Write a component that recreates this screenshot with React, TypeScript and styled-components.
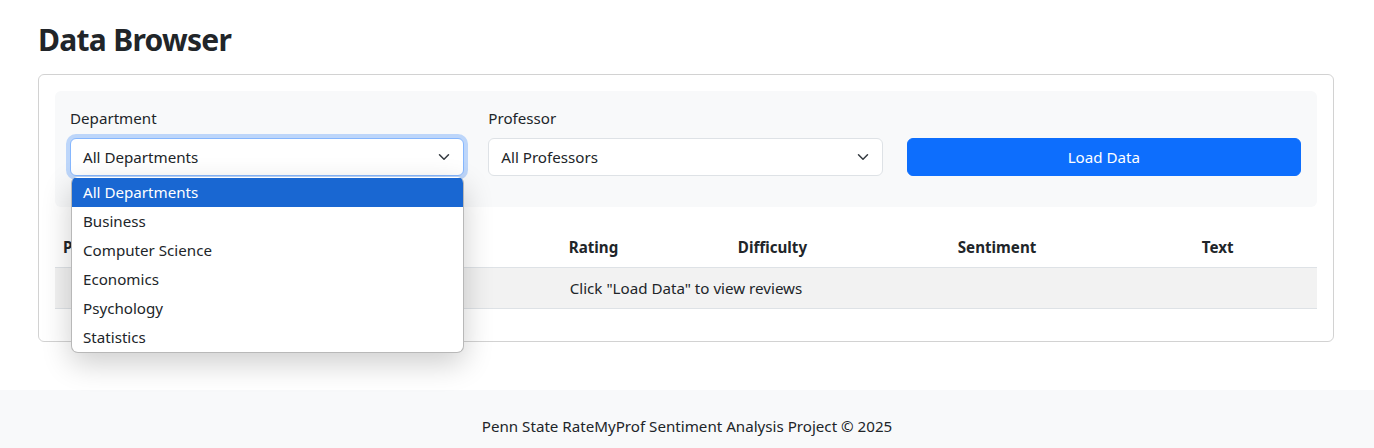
import React from "react";
import styled, { createGlobalStyle } from "styled-components";

const GlobalStyle = createGlobalStyle`
  *, *::before, *::after { box-sizing: border-box; }
  body {
    margin: 0;
    font-family: "Noto Sans", "Open Sans", sans-serif;
    font-size: 15.15px;
    line-height: 24px;
    color: #212529;
    background: #fff;
  }
`;

const Page = styled.div`
  min-height: 448px;
  display: flex;
  flex-direction: column;
`;

const Container = styled.main`
  width: 100%;
  max-width: 1320px;
  margin: 0 auto;
  padding: 21px 13px 0 11px;
`;

const Title = styled.h1`
  margin: 0 0 15px;
  font-size: 30px;
  line-height: 38px;
  font-weight: 700;
  letter-spacing: -0.7px;
`;

const Card = styled.section`
  border: 1px solid rgba(0, 0, 0, 0.175);
  border-radius: 6px;
  padding: 16px;
`;

const FilterPanel = styled.div`
  background: #f8f9fa;
  border-radius: 6px;
  padding: 15px 16px 16px 15px;
  margin-bottom: 20px;
`;

const FilterRow = styled.div`
  display: grid;
  grid-template-columns: repeat(3, 1fr);
  column-gap: 24px;
  align-items: end;
  padding-bottom: 15px;
`;

const Field = styled.div`
  display: flex;
  flex-direction: column;
  position: relative;
`;

const Label = styled.label`
  margin-bottom: 8px;
`;

const Select = styled.div<{ $focused?: boolean }>`
  position: relative;
  height: 38px;
  display: flex;
  align-items: center;
  padding: 0 36px 0 12px;
  background: #fff;
  border: 1px solid ${(p) => (p.$focused ? "#86b7fe" : "#dee2e6")};
  border-radius: 6px;
  box-shadow: ${(p) => (p.$focused ? "0 0 0 4px rgba(13,110,253,.25)" : "none")};
  white-space: nowrap;
`;

const Chevron = styled.svg`
  position: absolute;
  right: 13px;
  top: 50%;
  width: 12px;
  height: 12px;
  margin-top: -6px;
`;

const Menu = styled.ul`
  position: absolute;
  left: 1px;
  right: 0;
  top: 100%;
  margin: 1px 0 0;
  padding: 1px 0 0;
  list-style: none;
  background: #fff;
  border: 1px solid #b8b8b8;
  border-top: none;
  border-radius: 6px 6px 7px 7px;
  overflow: hidden;
  box-shadow: 0 10px 30px rgba(0, 0, 0, 0.2);
  z-index: 10;
`;

const MenuItem = styled.li<{ $active?: boolean }>`
  height: 29px;
  line-height: 29px;
  padding-left: 11px;
  background: ${(p) => (p.$active ? "#1967d2" : "transparent")};
  color: ${(p) => (p.$active ? "#fff" : "#212529")};
`;

const Button = styled.button`
  height: 38px;
  border: 1px solid #0d6efd;
  border-radius: 6px;
  background: #0d6efd;
  color: #fff;
  font: inherit;
  cursor: pointer;
`;

const Table = styled.table`
  width: 100%;
  border-collapse: collapse;
  margin-bottom: 16px;
`;

const Th = styled.th`
  text-align: left;
  font-weight: 700;
  padding: 8px;
  border-bottom: 1px solid #dee2e6;
`;

const Td = styled.td`
  padding: 8px;
  text-align: center;
  background: #f2f2f2;
  border-bottom: 1px solid #dee2e6;
`;

const Footer = styled.footer`
  margin-top: 48px;
  background: #f8f9fa;
  padding: 24px 0;
  text-align: center;
`;

const ChevronIcon = () => (
  <Chevron viewBox="0 0 16 16" aria-hidden>
    <path d="m2 5 6 6 6-6" fill="none" stroke="#343a40" strokeWidth="2" strokeLinecap="round" strokeLinejoin="round" />
  </Chevron>
);

const departments = ["All Departments", "Business", "Computer Science", "Economics", "Psychology", "Statistics"];
const columns = ["Professor", "Department", "Rating", "Difficulty", "Sentiment", "Text"];

export default function App() {
  return (
    <Page>
      <GlobalStyle />
      <Container>
        <Title>Data Browser</Title>
        <Card>
          <FilterPanel>
            <FilterRow>
              <Field>
                <Label>Department</Label>
                <Select $focused>
                  All Departments
                  <ChevronIcon />
                </Select>
                <Menu>
                  {departments.map((d, i) => (
                    <MenuItem key={d} $active={i === 0}>{d}</MenuItem>
                  ))}
                </Menu>
              </Field>
              <Field>
                <Label>Professor</Label>
                <Select>
                  All Professors
                  <ChevronIcon />
                </Select>
              </Field>
              <Button>Load Data</Button>
            </FilterRow>
          </FilterPanel>
          <Table>
            <thead>
              <tr>
                {columns.map((c) => (
                  <Th key={c}>{c}</Th>
                ))}
              </tr>
            </thead>
            <tbody>
              <tr>
                <Td colSpan={6}>Click "Load Data" to view reviews</Td>
              </tr>
            </tbody>
          </Table>
        </Card>
      </Container>
      <Footer>Penn State RateMyProf Sentiment Analysis Project © 2025</Footer>
    </Page>
  );
}
